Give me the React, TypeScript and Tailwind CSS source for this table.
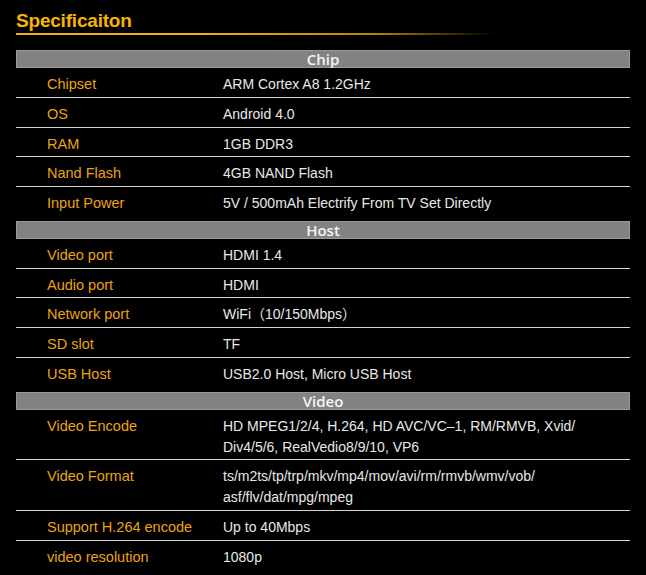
import React from "react";

type Row = { label: string; value: React.ReactNode };
type Section = { title: string; rows: Row[] };

const sections: Section[] = [
  {
    title: "Chip",
    rows: [
      { label: "Chipset", value: "ARM Cortex A8 1.2GHz" },
      { label: "OS", value: "Android 4.0" },
      { label: "RAM", value: "1GB DDR3" },
      { label: "Nand Flash", value: "4GB NAND Flash" },
      { label: "Input Power", value: "5V / 500mAh Electrify From TV Set Directly" },
    ],
  },
  {
    title: "Host",
    rows: [
      { label: "Video port", value: "HDMI 1.4" },
      { label: "Audio port", value: "HDMI" },
      { label: "Network port", value: "WiFi（10/150Mbps）" },
      { label: "SD slot", value: "TF" },
      { label: "USB Host", value: "USB2.0 Host, Micro USB Host" },
    ],
  },
  {
    title: "Video",
    rows: [
      {
        label: "Video Encode",
        value: (
          <>
            HD MPEG1/2/4, H.264, HD AVC/VC–1, RM/RMVB, Xvid/
            <br />
            Div4/5/6, RealVedio8/9/10, VP6
          </>
        ),
      },
      {
        label: "Video Format",
        value: (
          <>
            ts/m2ts/tp/trp/mkv/mp4/mov/avi/rm/rmvb/wmv/vob/
            <br />
            asf/flv/dat/mpg/mpeg
          </>
        ),
      },
      { label: "Support H.264 encode", value: "Up to 40Mbps" },
      { label: "video resolution", value: "1080p" },
    ],
  },
];

export default function App() {
  return (
    <div className="min-h-[575px] w-full bg-black font-['Liberation_Sans','Noto_Sans_CJK_SC',sans-serif] overflow-hidden">
      <div className="w-[614px] ml-[16px] pt-[9px]">
        <h1 className="text-[19px] leading-[24px] font-bold text-[#f7b400] tracking-[-0.2px]">Specificaiton</h1>
        <div className="h-[2px] w-[480px] bg-gradient-to-r from-[#f2b000] from-40% via-[#b88200] via-75% to-transparent"></div>

        <div className="mt-[15px]">
          {sections.map((section, si) => (
            <div key={section.title} className={si === 0 ? "" : "mt-[4px]"}>
              <div className="h-[18px] bg-[#828282] border border-[#9a9a9a] flex items-center justify-center">
                <span className="text-[15px] leading-[16px] font-semibold text-[#f4f4f4] font-['Open_Sans','Liberation_Sans',sans-serif]">
                  {section.title}
                </span>
              </div>
              {section.rows.map((row, ri) => (
                <div
                  key={row.label}
                  className={
                    ri === section.rows.length - 1
                      ? "grid grid-cols-[207px_1fr] pt-[6px] pb-[1.75px] border-b border-transparent leading-[21px]"
                      : "grid grid-cols-[207px_1fr] pt-[6px] pb-[1.75px] border-b border-[#d2d2d2] leading-[21px]"
                  }
                >
                  <div className="pl-[31px] text-[14.5px] text-[#eba312]">{row.label}</div>
                  <div className="text-[14px] text-[#e8e8e8]">{row.value}</div>
                </div>
              ))}
            </div>
          ))}
        </div>
      </div>
    </div>
  );
}
